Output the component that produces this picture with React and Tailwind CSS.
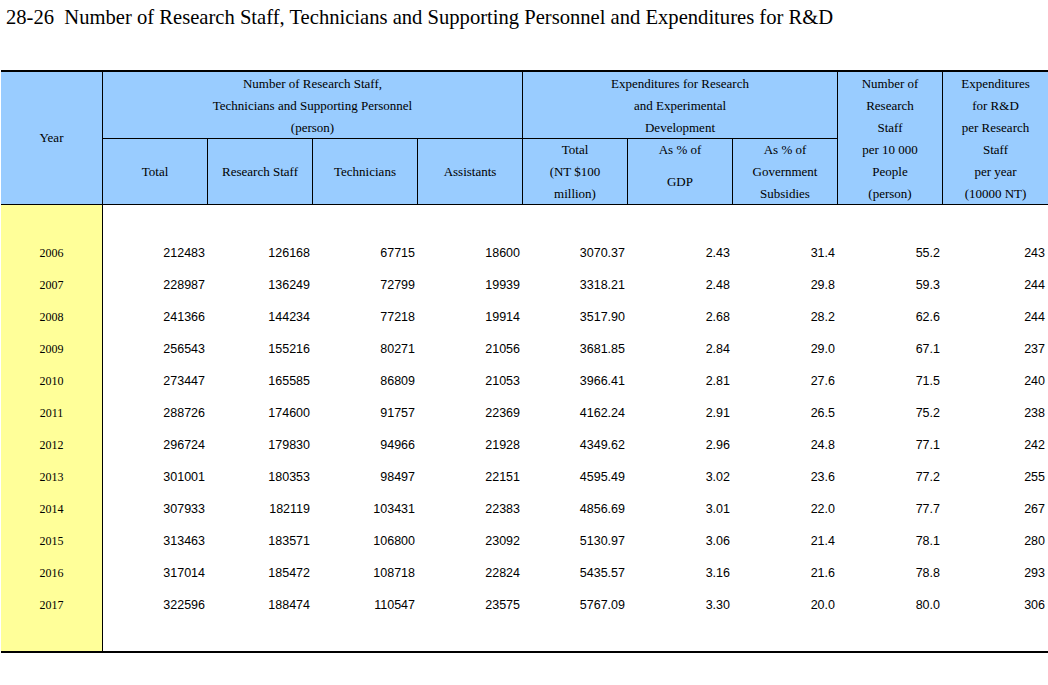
const rows = [
  ["2006", "212483", "126168", "67715", "18600", "3070.37", "2.43", "31.4", "55.2", "243"],
  ["2007", "228987", "136249", "72799", "19939", "3318.21", "2.48", "29.8", "59.3", "244"],
  ["2008", "241366", "144234", "77218", "19914", "3517.90", "2.68", "28.2", "62.6", "244"],
  ["2009", "256543", "155216", "80271", "21056", "3681.85", "2.84", "29.0", "67.1", "237"],
  ["2010", "273447", "165585", "86809", "21053", "3966.41", "2.81", "27.6", "71.5", "240"],
  ["2011", "288726", "174600", "91757", "22369", "4162.24", "2.91", "26.5", "75.2", "238"],
  ["2012", "296724", "179830", "94966", "21928", "4349.62", "2.96", "24.8", "77.1", "242"],
  ["2013", "301001", "180353", "98497", "22151", "4595.49", "3.02", "23.6", "77.2", "255"],
  ["2014", "307933", "182119", "103431", "22383", "4856.69", "3.01", "22.0", "77.7", "267"],
  ["2015", "313463", "183571", "106800", "23092", "5130.97", "3.06", "21.4", "78.1", "280"],
  ["2016", "317014", "185472", "108718", "22824", "5435.57", "3.16", "21.6", "78.8", "293"],
  ["2017", "322596", "188474", "110547", "23575", "5767.09", "3.30", "20.0", "80.0", "306"],
];

const cols = "grid grid-cols-[102px_repeat(8,105px)_1fr]";
const hcell = "flex flex-col items-center justify-center text-center border-black";

const App = () => {
  return (
    <div className="min-h-[685px] bg-white text-black font-['Liberation_Serif',serif]">
      <h1 className="pt-[5px] pl-[6px] text-[20.6px] leading-[24px] font-normal whitespace-pre">
        28-26  Number of Research Staff, Technicians and Supporting Personnel and Expenditures for R&amp;D
      </h1>

      <div className="mt-[41px] ml-[1px] border-t-2 border-b-2 border-black">
        {/* header */}
        <div className={`${cols} grid-rows-[67px_65px] bg-[#99ccff] text-[13px] leading-[22px] border-b border-black`}>
          <div className={`${hcell} row-span-2 border-r`}>Year</div>
          <div className={`${hcell} col-span-4 border-r border-b pt-[2px]`}>
            <span>Number of Research Staff,</span>
            <span>Technicians and Supporting Personnel</span>
            <span>(person)</span>
          </div>
          <div className={`${hcell} col-span-3 border-r border-b pt-[2px]`}>
            <span>Expenditures for Research</span>
            <span>and Experimental</span>
            <span>Development</span>
          </div>
          <div className={`${hcell} row-span-2 border-r pt-[1px]`}>
            <span>Number of</span>
            <span>Research</span>
            <span>Staff</span>
            <span>per 10 000</span>
            <span>People</span>
            <span>(person)</span>
          </div>
          <div className={`${hcell} row-span-2 pt-[1px]`}>
            <span>Expenditures</span>
            <span>for R&amp;D</span>
            <span>per Research</span>
            <span>Staff</span>
            <span>per year</span>
            <span>(10000 NT)</span>
          </div>
          <div className={`${hcell} border-r`}>Total</div>
          <div className={`${hcell} border-r`}>Research Staff</div>
          <div className={`${hcell} border-r`}>Technicians</div>
          <div className={`${hcell} border-r`}>Assistants</div>
          <div className={`${hcell} border-r`}>
            <span>Total</span>
            <span>(NT $100</span>
            <span>million)</span>
          </div>
          <div className="flex flex-col items-center justify-start text-center border-r border-black">
            <span>As % of</span>
            <span className="mt-[10px]">GDP</span>
          </div>
          <div className={`${hcell} border-r`}>
            <span>As % of</span>
            <span>Government</span>
            <span>Subsidies</span>
          </div>
        </div>

        {/* body */}
        <div className={cols}>
          <div className="bg-[#ffff99] border-r border-black pt-[32px] pb-[30px] text-[12px]">
            {rows.map((r) => (
              <div key={r[0]} className="h-[32px] flex items-center justify-center">
                {r[0]}
              </div>
            ))}
          </div>
          {[1, 2, 3, 4, 5, 6, 7, 8, 9].map((c) => (
            <div key={c} className="pt-[32px] pb-[30px] pr-[3px] text-[12.5px] font-['Liberation_Sans',Arial,sans-serif]">
              {rows.map((r) => (
                <div key={r[0]} className="h-[32px] flex items-center justify-end">
                  {r[c]}
                </div>
              ))}
            </div>
          ))}
        </div>
      </div>
    </div>
  );
};

export default App;
